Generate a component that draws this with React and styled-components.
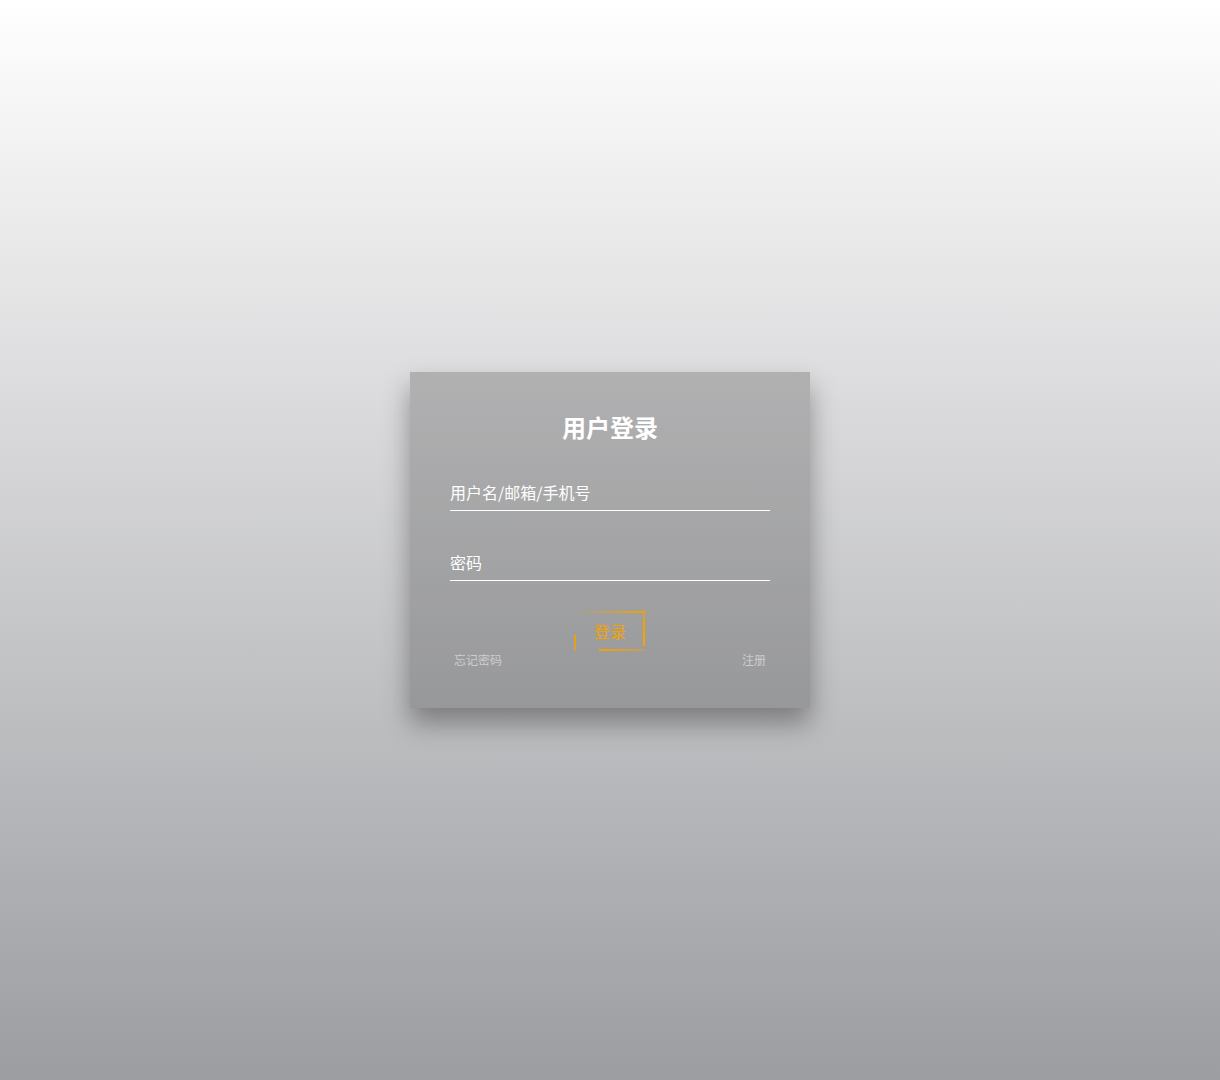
import React from 'react';
import styled, { createGlobalStyle } from 'styled-components';

const GlobalStyle = createGlobalStyle`
  html, body {
    margin: 0;
    padding: 0;
  }
  body {
    font-family: "Noto Sans CJK SC", "Noto Sans", sans-serif;
    background: linear-gradient(#ffffff, #9c9da1);
    min-height: 100vh;
  }
  * {
    box-sizing: border-box;
  }
`

const Page = styled.div`
  min-height: 100vh;
  display: flex;
  align-items: center;
  justify-content: center;
`

const Box = styled.form`
  width: 400px;
  padding: 40px;
  background: rgba(0, 0, 0, 0.2);
  box-shadow: 0 15px 25px rgba(0, 0, 0, 0.35);
`

const Title = styled.h2`
  margin: 0 0 32px;
  font-size: 24px;
  line-height: 30px;
  font-weight: bold;
  color: #fff;
  text-align: center;
`

const Field = styled.input`
  display: block;
  width: 100%;
  margin: 0 0 ${props => props.gap}px;
  padding: 8px 0;
  font-family: inherit;
  font-size: 16px;
  line-height: 20px;
  height: 37px;
  color: #fff;
  background: transparent;
  border: none;
  border-bottom: 1px solid #fff;
  outline: none;

  &::placeholder {
    color: #fff;
    opacity: 1;
  }
`

const ButtonRow = styled.div`
  display: flex;
  justify-content: center;
  margin-top: 30px;
`

const LoginButton = styled.a`
  position: relative;
  display: inline-block;
  padding: 10px 20px;
  font-size: 16px;
  line-height: 20px;
  color: #f5a200;
  text-decoration: none;
  overflow: hidden;
  cursor: pointer;
`

const Line = styled.span`
  position: absolute;
  display: block;
`

const TopLine = styled(Line)`
  top: 0;
  left: 0;
  width: 100%;
  height: 2px;
  background: linear-gradient(90deg, transparent, #f5a200);
`

const RightLine = styled(Line)`
  top: -5px;
  right: 1px;
  width: 2px;
  height: 100%;
  background: linear-gradient(180deg, transparent, #f5a200 40%);
`

const BottomLine = styled(Line)`
  bottom: 0;
  left: 25px;
  width: 100%;
  height: 2px;
  background: linear-gradient(270deg, transparent, #f5a200);
`

const LeftLine = styled(Line)`
  top: 24px;
  left: 0;
  width: 2px;
  height: 100%;
  background: linear-gradient(360deg, transparent, #f5a200);
`

const Links = styled.div`
  display: flex;
  justify-content: space-between;
  padding: 0 4px;
  font-size: 12px;
  line-height: 17px;
`

const SmallLink = styled.a`
  color: rgba(255, 255, 255, 0.5);
  text-decoration: none;
  cursor: pointer;
`

const App = () => {
  return (
    <>
      <GlobalStyle />
      <Page>
        <Box onSubmit={e => e.preventDefault()}>
          <Title>用户登录</Title>
          <Field type="text" placeholder="用户名/邮箱/手机号" gap={33} />
          <Field type="password" placeholder="密码" gap={0} />
          <ButtonRow>
            <LoginButton>
              <TopLine />
              <RightLine />
              <BottomLine />
              <LeftLine />
              登录
            </LoginButton>
          </ButtonRow>
          <Links>
            <SmallLink>忘记密码</SmallLink>
            <SmallLink>注册</SmallLink>
          </Links>
        </Box>
      </Page>
    </>
  )
}

export default App;
